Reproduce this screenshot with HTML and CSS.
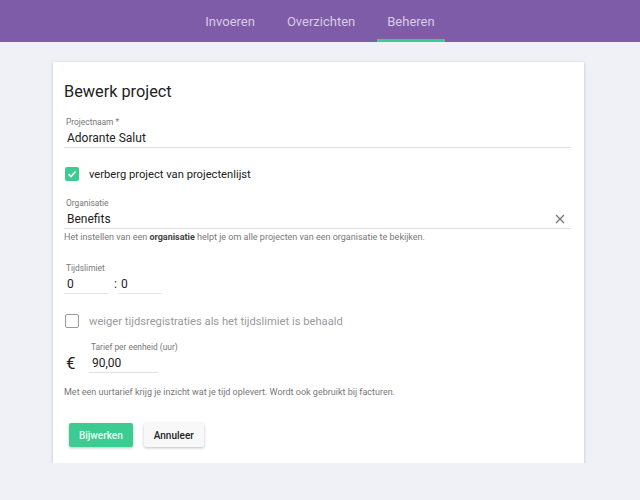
FILE: index.html
```html
<!DOCTYPE html>
<html lang="nl">
<head>
    <meta charset="UTF-8">
    <meta name="viewport" content="width=device-width, initial-scale=1.0">
    <title>Bewerk project</title>
    <link rel="stylesheet" href="styles.css">
</head>
<body>

    <header class="topbar">
        <nav class="nav">
            <a class="nav-item" href="#">Invoeren</a>
            <a class="nav-item" href="#">Overzichten</a>
            <a class="nav-item active" href="#">Beheren</a>
        </nav>
    </header>

    <main class="card">
        <h1 class="title">Bewerk project</h1>

        <div class="field">
            <label class="label">Projectnaam *</label>
            <div class="input">Adorante Salut</div>
        </div>

        <div class="check-row">
            <span class="checkbox checked">
                <svg width="10" height="10" viewBox="0 0 10 10"><path d="M1.5 5.2 L4 7.5 L8.5 2.5" fill="none" stroke="#fff" stroke-width="1.6"/></svg>
            </span>
            <span class="check-text">verberg project van projectenlijst</span>
        </div>

        <div class="field org">
            <label class="label">Organisatie</label>
            <div class="input with-clear">
                <span>Benefits</span>
                <svg class="clear" width="10" height="10" viewBox="0 0 10 10"><path d="M1 1 L9 9 M9 1 L1 9" stroke="#777" stroke-width="1.3"/></svg>
            </div>
            <p class="hint">Het instellen van een <b>organisatie</b> helpt je om alle projecten van een organisatie te bekijken.</p>
        </div>

        <div class="field time">
            <label class="label">Tijdslimiet</label>
            <div class="time-row">
                <div class="input small">0</div>
                <span class="colon">:</span>
                <div class="input small">0</div>
            </div>
        </div>

        <div class="check-row muted">
            <span class="checkbox"></span>
            <span class="check-text">weiger tijdsregistraties als het tijdslimiet is behaald</span>
        </div>

        <div class="rate-row">
            <span class="euro">€</span>
            <div class="field rate">
                <label class="label">Tarief per eenheid (uur)</label>
                <div class="input">90,00</div>
            </div>
        </div>
        <p class="hint rate-hint">Met een uurtarief krijg je inzicht wat je tijd oplevert. Wordt ook gebruikt bij facturen.</p>

        <div class="actions">
            <button class="btn primary">Bijwerken</button>
            <button class="btn">Annuleer</button>
        </div>
    </main>

</body>
</html>
```

FILE: styles.css
```css
body {
    margin: 0;
    font-family: Roboto, 'Liberation Sans', sans-serif;
    background-color: #f0f1f6;
    color: #222222;
}

.topbar {
    background-color: #7f5ca8;
    height: 42px;
}

.nav {
    display: flex;
    justify-content: center;
    gap: 12px;
    height: 100%;
}

.nav-item {
    display: flex;
    align-items: center;
    padding: 4px 10px 0;
    font-size: 13px;
    color: #d7cbe6;
    text-decoration: none;
    border-bottom: 3px solid transparent;
    box-sizing: border-box;
}

.nav-item.active {
    border-bottom-color: #3ccb91;
}

.card {
    margin: 20px 56px 0 53px;
    background-color: #ffffff;
    box-shadow: 0 1px 3px rgba(0, 0, 0, 0.22);
    padding: 20px 13px 16px 11px;
}

.title {
    margin: 0 0 16px;
    font-size: 16.3px;
    font-weight: 400;
    color: #222222;
}

.label {
    display: block;
    font-size: 8.4px;
    color: #777777;
    line-height: 10px;
    padding-left: 2px;
}

.input {
    font-size: 12px;
    line-height: 16px;
    padding: 3px 3px 1px;
    border-bottom: 1px solid #e2e2e2;
}

.with-clear {
    display: flex;
    justify-content: space-between;
    align-items: center;
}

.clear {
    margin-right: 3px;
}

.check-row {
    display: flex;
    align-items: center;
    gap: 10px;
    margin: 19px 0 0 1px;
}

.checkbox {
    width: 14px;
    height: 14px;
    box-sizing: border-box;
    border: 1.5px solid #8a8a8a;
    border-radius: 2px;
    display: flex;
    align-items: center;
    justify-content: center;
}

.checkbox.checked {
    border: none;
    background-color: #3ccb91;
}

.check-text {
    font-size: 11.2px;
}

.muted .check-text {
    color: #9a9a9a;
}

.muted .checkbox {
    border-color: #9a9a9a;
}

.org {
    margin-top: 17px;
}

.hint {
    margin: 3px 0 0;
    font-size: 9px;
    color: #777777;
}

.hint b {
    color: #444444;
}

.time {
    margin-top: 21px;
}

.time-row {
    display: flex;
    align-items: center;
}

.input.small {
    width: 38px;
}

.colon {
    font-size: 12px;
    margin: 0 1px 0 6px;
}

.muted {
    margin-top: 20px;
}

.rate-row {
    display: flex;
    align-items: flex-end;
    margin-top: 14px;
}

.euro {
    font-size: 17px;
    width: 25px;
    padding-left: 2px;
    box-sizing: border-box;
}

.rate .input {
    width: 63px;
}

.rate-hint {
    margin-top: 14px;
}

.actions {
    display: flex;
    gap: 11px;
    margin: 26px 0 0 5px;
}

.btn {
    font-family: inherit;
    font-size: 10px;
    font-weight: 500;
    height: 24px;
    padding: 0 10px;
    border: none;
    border-radius: 2px;
    background-color: #f8f8f8;
    color: #222222;
    box-shadow: 0 1px 3px rgba(0, 0, 0, 0.25);
}

.btn.primary {
    background-color: #3ccb91;
    color: #e8fff4;
}
```
